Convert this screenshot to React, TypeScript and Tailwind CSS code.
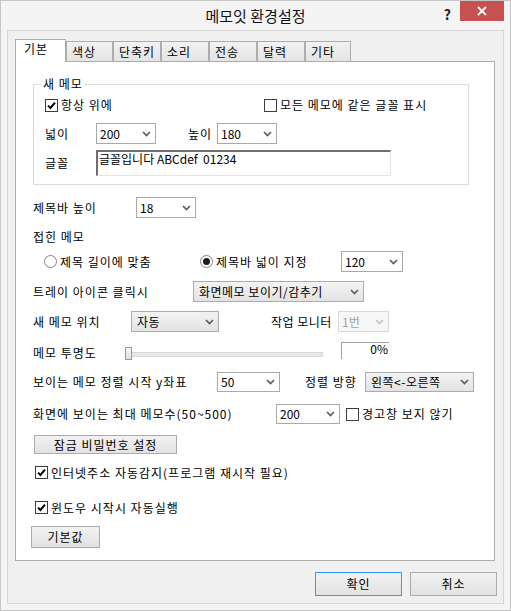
import React from 'react';

type ComboKind = 'edit' | 'list' | 'disabled';

const Chevron = ({ disabled }: { disabled?: boolean }) => (
  <svg width="9" height="6" viewBox="0 0 9 6" className="shrink-0">
    <path d="M1 1 L4.5 4.5 L8 1" fill="none" stroke={disabled ? '#c2c2c2' : '#5c5c5c'} strokeWidth="1.7" />
  </svg>
);

const Combo = ({ value, className, kind = 'edit' }: { value: string; className: string; kind?: ComboKind }) => {
  const look =
    kind === 'edit'
      ? 'bg-white border-[#a9a9a9] pl-[3px] tracking-normal'
      : kind === 'list'
      ? 'bg-linear-to-b from-[#f3f3f3] to-[#e3e3e3] border-[#acacac] pl-[5px] tracking-[0.5px]'
      : 'bg-[#f7f7f7] border-[#d9d9d9] text-[#a3a3a3] pl-[3px] tracking-normal';
  return (
    <div className={`flex items-center justify-between border pr-[4px] text-[12px] leading-[14px] ${look} ${className}`}>
      <span className="whitespace-nowrap">{value}</span>
      <Chevron disabled={kind === 'disabled'} />
    </div>
  );
};

const Check = ({ checked, label }: { checked?: boolean; label: string }) => (
  <div className="flex items-center gap-[3px] whitespace-nowrap">
    <span className="flex h-[13px] w-[13px] shrink-0 items-center justify-center border border-[#3c3c3c] bg-white">
      {checked && (
        <svg width="9" height="9" viewBox="0 0 9 9">
          <path d="M1 4.6 L3.4 7 L8 1.6" fill="none" stroke="#000" strokeWidth="2" />
        </svg>
      )}
    </span>
    <span>{label}</span>
  </div>
);

const Radio = ({ on, label, className }: { on?: boolean; label: string; className: string }) => (
  <div className={`flex items-center gap-[3px] whitespace-nowrap ${className}`}>
    <span className="flex h-[13px] w-[13px] shrink-0 items-center justify-center rounded-full border border-[#828282] bg-white">
      {on && <span className="h-[7px] w-[7px] rounded-full bg-[#1c1c1c]" />}
    </span>
    <span>{label}</span>
  </div>
);

const Button = ({ label, className }: { label: string; className: string }) => (
  <div className={`flex items-center justify-center border bg-linear-to-b from-[#f2f2f2] to-[#e2e2e2] text-[12px] ${className}`}>
    {label}
  </div>
);

const tabs = [
  { name: '색상', w: 'w-[47px]' },
  { name: '단축키', w: 'w-[48px]' },
  { name: '소리', w: 'w-[48px]' },
  { name: '전송', w: 'w-[48px]' },
  { name: '달력', w: 'w-[48px]' },
  { name: '기타', w: 'w-[46px]' },
];

export default function App() {
  return (
    <div className="flex h-[611px] w-[511px] flex-col border border-[#c6c6c6] bg-[#f4f4f4] font-['Noto_Sans_CJK_KR','Noto_Sans',sans-serif] text-[12px] leading-[14px] tracking-[1px] text-black">
      {/* title bar */}
      <div className="relative flex h-[29px] shrink-0 items-center justify-center pt-[1px] text-[15px] leading-[18px] tracking-normal text-[#111]">
        메모잇 환경설정
        <div className="absolute right-[6px] top-0 flex items-start">
          <span className="mr-[9px] mt-[5px] text-[14px] font-bold leading-[16px] text-[#222]">?</span>
          <div className="flex h-[20px] w-[44px] items-center justify-center bg-[#c75050]">
            <svg width="10" height="10" viewBox="0 0 10 10">
              <path d="M1 1 L9 9 M9 1 L1 9" stroke="#fff" strokeWidth="1.8" />
            </svg>
          </div>
        </div>
      </div>

      {/* client area */}
      <div className="mx-[6px] mb-[6px] flex flex-1 flex-col border border-[#d6d6d6] bg-[#f0f0f0] pl-[7px] pt-[8px]">
        <div className="flex items-end">
          <div className="relative z-10 -mb-px h-[23px] w-[51px] border border-b-0 border-[#acacac] bg-white pl-[8px] pt-[2px]">기본</div>
          {tabs.map((t) => (
            <div
              key={t.name}
              className={`h-[20px] border border-b-0 border-[#acacac] bg-linear-to-b from-[#f2f2f2] to-[#e4e4e4] pl-[5px] pt-[3px] ${t.w}`}
            >
              {t.name}
            </div>
          ))}
        </div>

        <div className="flex h-[500px] w-[480px] flex-col border border-[#acacac] bg-white pl-[17px] pt-[22px]">
          {/* group: 새 메모 */}
          <div className="relative flex h-[101px] w-[436px] shrink-0 flex-col border border-[#dcdcdc] pl-[11px]">
            <span className="absolute left-[8px] top-[-8px] bg-white px-[1px]">새 메모</span>
            <div className="mt-[11px] flex h-[18px] items-center">
              <div className="w-[219px]">
                <Check checked label="항상 위에" />
              </div>
              <Check label="모든 메모에 같은 글꼴 표시" />
            </div>
            <div className="mt-[9px] flex h-[21px] items-center">
              <span className="w-[51px]">넓이</span>
              <Combo value="200" className="h-[21px] w-[60px]" />
              <span className="ml-[32px] w-[29px]">높이</span>
              <Combo value="180" className="h-[21px] w-[60px]" />
            </div>
            <div className="mt-[6px] flex h-[26px] items-center">
              <span className="w-[51px]">글꼴</span>
              <div className="h-[26px] w-[295px] border-b border-l-2 border-r border-t-2 border-b-[#e3e3e3] border-l-[#6e6e6e] border-r-[#e3e3e3] border-t-[#6e6e6e] pl-[1px] text-[12px] leading-[13px] tracking-normal">
                글꼴입니다 ABCdef&nbsp; 01234
              </div>
            </div>
          </div>

          <div className="mt-[12px] flex h-[21px] items-center">
            <span className="w-[103px]">제목바 높이</span>
            <Combo value="18" className="h-[21px] w-[60px]" />
          </div>

          <div className="mt-[9px] flex h-[20px] items-center">접힌 메모</div>

          <div className="mt-[4px] flex h-[21px] items-center">
            <Radio label="제목 길이에 맞춤" className="ml-[11px] w-[156px]" />
            <Radio on label="제목바 넓이 지정" className="w-[141px]" />
            <Combo value="120" className="h-[21px] w-[62px]" />
          </div>

          <div className="mt-[9px] flex h-[21px] items-center">
            <span className="w-[160px]">트레이 아이콘 클릭시</span>
            <Combo kind="list" value="화면메모 보이기/감추기" className="h-[21px] w-[171px]" />
          </div>

          <div className="mt-[9px] flex h-[21px] items-center">
            <span className="w-[98px]">새 메모 위치</span>
            <Combo kind="list" value="자동" className="h-[21px] w-[88px]" />
            <span className="ml-[52px] w-[67px] whitespace-nowrap tracking-[0.5px]">작업 모니터</span>
            <Combo kind="disabled" value="1번" className="h-[21px] w-[51px]" />
          </div>

          <div className="mt-[10px] flex h-[17px] items-center">
            <span className="mt-[4px] w-[92px]">메모 투명도</span>
            <div className="relative mt-[5px] h-[13px] w-[198px]">
              <div className="absolute left-[4px] right-0 top-[5px] h-[5px] border border-[#d6d6d6] bg-[#e8e8e8]" />
              <div className="absolute left-0 top-0 h-[13px] w-[7px] border border-[#9a9a9a] bg-linear-to-b from-[#f4f4f4] to-[#e2e2e2]" />
            </div>
            <div className="ml-[18px] flex h-[17px] w-[48px] justify-end border-l border-t border-[#a0a0a0] pr-[1px] leading-[12px] tracking-normal">
              0%
            </div>
          </div>

          <div className="mt-[13px] flex h-[20px] items-center">
            <span className="w-[184px] whitespace-nowrap">보이는 메모 정렬 시작 y좌표</span>
            <Combo value="50" className="h-[20px] w-[63px]" />
            <span className="ml-[25px] w-[60px] whitespace-nowrap">정렬 방향</span>
            <Combo kind="list" value="왼쪽<-오른쪽" className="h-[20px] w-[109px]" />
          </div>

          <div className="mt-[12px] flex h-[20px] items-center">
            <span className="w-[243px] whitespace-nowrap">화면에 보이는 최대 메모수(50~500)</span>
            <Combo value="200" className="h-[20px] w-[64px]" />
            <div className="ml-[6px]">
              <Check label="경고창 보지 않기" />
            </div>
          </div>

          <div className="mt-[11px] flex h-[19px] items-center">
            <Button label="잠금 비밀번호 설정" className="ml-[1px] h-[19px] w-[143px] border-[#acacac]" />
          </div>

          <div className="mt-[9px] flex h-[19px] items-center pl-[2px]">
            <Check checked label="인터넷주소 자동감지(프로그램 재시작 필요)" />
          </div>

          <div className="mt-[16px] flex h-[19px] items-center pl-[2px]">
            <Check checked label="윈도우 시작시 자동실행" />
          </div>

          <div className="mt-[9px] flex h-[22px] items-center">
            <Button label="기본값" className="-ml-[2px] h-[22px] w-[69px] border-[#acacac]" />
          </div>
        </div>

        <div className="mt-[11px] flex justify-end gap-[8px] pr-[6px]">
          <Button label="확인" className="h-[24px] w-[87px] border-[#3399ff]" />
          <Button label="취소" className="h-[24px] w-[87px] border-[#acacac]" />
        </div>
      </div>
    </div>
  );
}
